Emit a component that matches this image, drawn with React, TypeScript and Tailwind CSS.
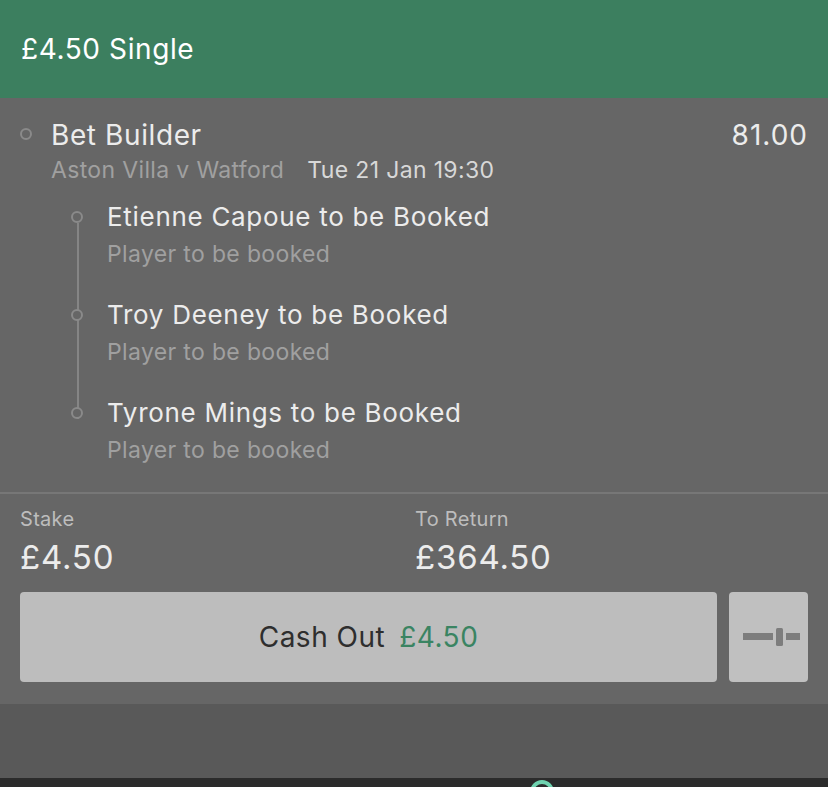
import React from "react";

const legs = [
  "Etienne Capoue to be Booked",
  "Troy Deeney to be Booked",
  "Tyrone Mings to be Booked",
];

export default function App() {
  return (
    <div
      className="w-[828px] h-[787px] overflow-hidden flex flex-col bg-[#666666]"
      style={{ fontFamily: "Inter, 'Noto Sans', sans-serif" }}
    >
      <div className="h-[98px] bg-[#3c7f5f] flex items-center px-[21px] shrink-0">
        <span className="text-white text-[28px] leading-none tracking-[0.6px]">£4.50 Single</span>
      </div>

      <div className="bg-[#666666] shrink-0">
        <div className="px-[20px] pt-[20px]">
          <div className="flex items-start">
            <div className="w-[31px] pt-[10px] shrink-0">
              <div className="w-[12px] h-[12px] rounded-full border-[2px] border-[#8a8a8a]" />
            </div>
            <div className="flex-1">
              <div className="flex justify-between items-start">
                <span className="text-[#ececec] text-[28px] leading-[34px] tracking-[0.6px]">Bet Builder</span>
                <span className="text-[#ececec] text-[28px] leading-[34px] tracking-[1px]">81.00</span>
              </div>
              <div className="flex gap-[23px] text-[23px] leading-[30px] mt-[3px] tracking-[0.35px]">
                <span className="text-[#a0a0a0]">Aston Villa v Watford</span>
                <span className="text-[#d8d8d8]">Tue 21 Jan 19:30</span>
              </div>
            </div>
          </div>

          <div className="relative pl-[87px] pt-[15px] pb-[27px]">
            <div className="absolute left-[57px] top-[38px] h-[196px] w-[2px] bg-[#858585]" />
            {legs.map((l, i) => (
              <div key={l} className={`relative ${i > 0 ? "mt-[29px]" : ""}`}>
                <div className="absolute left-[-36px] top-[11px] w-[12px] h-[12px] rounded-full border-[2px] border-[#8a8a8a] bg-[#666666]" />
                <div className="text-[#ececec] text-[26px] leading-[34px] tracking-[0.7px]">{l}</div>
                <div className="text-[#a0a0a0] text-[23px] leading-[30px] mt-[5px] tracking-[0.35px]">Player to be booked</div>
              </div>
            ))}
          </div>
        </div>

        <div className="h-[2px] bg-[#777777]" />

        <div className="px-[20px] pt-[13px] pb-[22px]">
          <div className="flex">
            <div className="w-[395px]">
              <div className="text-[#bdbdbd] text-[20px] leading-[24px] tracking-[0.3px]">Stake</div>
              <div className="text-[#ececec] text-[33px] leading-[40px] mt-[6px] tracking-[0.8px]">£4.50</div>
            </div>
            <div>
              <div className="text-[#bdbdbd] text-[20px] leading-[24px] tracking-[0.3px]">To Return</div>
              <div className="text-[#ececec] text-[33px] leading-[40px] mt-[6px] tracking-[0.8px]">£364.50</div>
            </div>
          </div>
          <div className="flex gap-[12px] mt-[15px]">
            <div className="flex-1 h-[90px] rounded-[4px] bg-[#bdbdbd] flex items-center justify-center gap-[14px] text-[28px] tracking-[0.5px]">
              <span className="text-[#2e2e2e]">Cash Out</span>
              <span className="text-[#3a8462]">£4.50</span>
            </div>
            <div className="w-[79px] h-[90px] rounded-[4px] bg-[#c0c0c0] flex items-center justify-center pl-[6px]">
              <svg width="57" height="18" viewBox="0 0 57 18">
                <rect x="0" y="5" width="30" height="7" fill="#7d7d7d" />
                <rect x="33" y="0" width="7" height="18" rx="1.5" fill="#7d7d7d" />
                <rect x="43" y="5" width="14" height="7" fill="#7d7d7d" />
              </svg>
            </div>
          </div>
        </div>
      </div>

      <div className="flex-1 bg-[#595959]" />
      <div className="h-[9px] bg-[#2b2b2b] relative shrink-0">
        <div className="absolute left-[530px] top-[2px] w-[24px] h-[24px] rounded-full border-[4px] border-[#6fd3b0]" />
      </div>
    </div>
  );
}
